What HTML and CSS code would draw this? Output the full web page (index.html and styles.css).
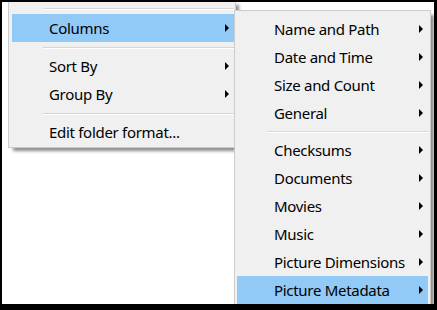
FILE: index.html
```html
<!DOCTYPE html>
<html lang="en">
  <head>
    <meta charset="UTF-8" />
    <title>Folder menu</title>
    <link rel="stylesheet" href="styles.css">
  </head>
  <body>
    <div class="frame">
      <div class="menu main-menu">
        <div class="sep first"></div>
        <div class="item sub active">Columns</div>
        <div class="sep"></div>
        <div class="item sub">Sort By</div>
        <div class="item sub">Group By</div>
        <div class="sep"></div>
        <div class="item">Edit folder format...</div>
      </div>

      <div class="menu sub-menu">
        <div class="item sub">Name and Path</div>
        <div class="item sub">Date and Time</div>
        <div class="item sub">Size and Count</div>
        <div class="item sub">General</div>
        <div class="sep"></div>
        <div class="item sub">Checksums</div>
        <div class="item sub">Documents</div>
        <div class="item sub">Movies</div>
        <div class="item sub">Music</div>
        <div class="item sub">Picture Dimensions</div>
        <div class="item sub active">Picture Metadata</div>
      </div>
    </div>
  </body>
</html>
```

FILE: styles.css
```css
* {
  box-sizing: border-box;
}
body {
  margin: 0;
  background: #fff;
  font-family: "Noto Sans", "Open Sans", sans-serif;
}
.frame {
  position: relative;
  width: 437px;
  height: 310px;
  border-style: solid;
  border-color: #000;
  border-width: 2px 3px 6px 2px;
  background: #fff;
  overflow: hidden;
}
.menu {
  position: absolute;
  background: #f0f0f0;
  border: 1px solid #cccccc;
  box-shadow: 4px 4px 3px -1px rgba(0, 0, 0, 0.45);
}
.main-menu {
  left: 6px;
  top: -2px;
  width: 228px;
  padding: 0 1px 1px 3px;
}
.sub-menu {
  left: 232px;
  top: 8px;
  width: 197px;
  padding: 4px 2px 4px 2px;
}
.item {
  height: 28px;
  display: flex;
  align-items: center;
  justify-content: space-between;
  padding: 0 5px 0 37px;
  font-size: 15px;
  letter-spacing: -0.3px;
  color: #000;
  white-space: nowrap;
}
.item.active {
  background: #91c9f7;
}
.item.sub::after {
  content: "";
  width: 0;
  height: 0;
  border-left: 4px solid #000;
  border-top: 4px solid transparent;
  border-bottom: 4px solid transparent;
}
.sep {
  height: 10px;
  display: flex;
  align-items: center;
  padding-left: 31px;
}
.sep::before {
  content: "";
  flex: 1;
  height: 1px;
  background: #d7d7d7;
  box-shadow: 0 1px 0 #fff;
}
.sep.first {
  height: 13px;
  padding-top: 2px;
}
.sub-menu .sep {
  height: 9px;
}
```
